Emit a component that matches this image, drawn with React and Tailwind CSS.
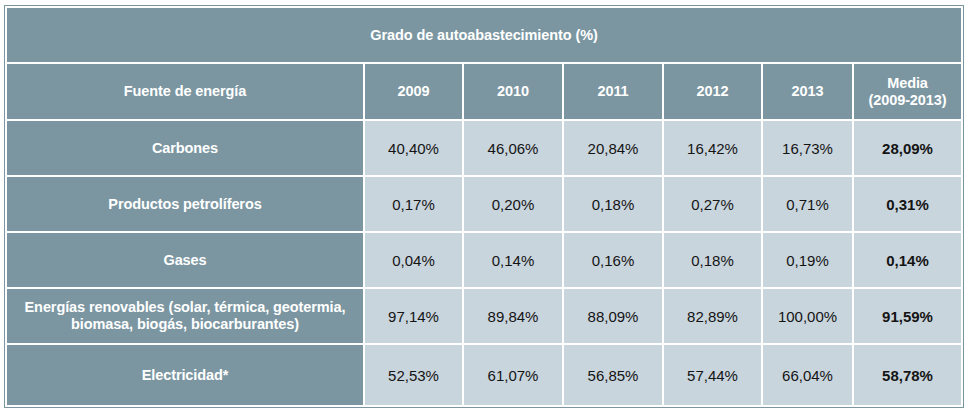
const years = ["2009", "2010", "2011", "2012", "2013"];

const rows = [
  { name: "Carbones", values: ["40,40%", "46,06%", "20,84%", "16,42%", "16,73%"], avg: "28,09%" },
  { name: "Productos petrolíferos", values: ["0,17%", "0,20%", "0,18%", "0,27%", "0,71%"], avg: "0,31%" },
  { name: "Gases", values: ["0,04%", "0,14%", "0,16%", "0,18%", "0,19%"], avg: "0,14%" },
  {
    name: (
      <>
        Energías renovables (solar, térmica, geotermia,
        <br />
        biomasa, biogás, biocarburantes)
      </>
    ),
    values: ["97,14%", "89,84%", "88,09%", "82,89%", "100,00%"],
    avg: "91,59%",
  },
  { name: "Electricidad*", values: ["52,53%", "61,07%", "56,85%", "57,44%", "66,04%"], avg: "58,78%" },
];

function Head({ children, className = "" }) {
  return (
    <div className={`bg-[#7b96a1] text-white font-bold text-[14.5px] tracking-[-0.1px] flex items-center justify-center text-center ${className}`}>
      {children}
    </div>
  );
}

function Cell({ children, bold }) {
  return (
    <div className={`bg-[#c9d5dd] text-[#141414] text-[15px] flex items-center justify-center ${bold ? "font-bold" : ""}`}>
      {children}
    </div>
  );
}

export default function App() {
  return (
    <div className="bg-white w-[972px] h-[417px] pl-[4px] pt-[5px]" style={{ fontFamily: '"Liberation Sans", Arial, sans-serif' }}>
      <div className="inline-grid grid-cols-[356px_97px_98px_98px_97px_89px_107px] grid-rows-[54px_55px_54px_54px_54px_54px_60px] gap-[2px] p-[2px] border border-[#7b96a1] leading-[17px]">
        <Head className="col-span-7">Grado de autoabastecimiento (%)</Head>
        <Head>Fuente de energía</Head>
        {years.map((y) => (
          <Head key={y}>{y}</Head>
        ))}
        <Head>
          Media
          <br />
          (2009-2013)
        </Head>
        {rows.map((r, i) => (
          <div key={i} className="contents">
            <Head>{r.name}</Head>
            {r.values.map((v, j) => (
              <Cell key={j}>{v}</Cell>
            ))}
            <Cell bold>{r.avg}</Cell>
          </div>
        ))}
      </div>
    </div>
  );
}
